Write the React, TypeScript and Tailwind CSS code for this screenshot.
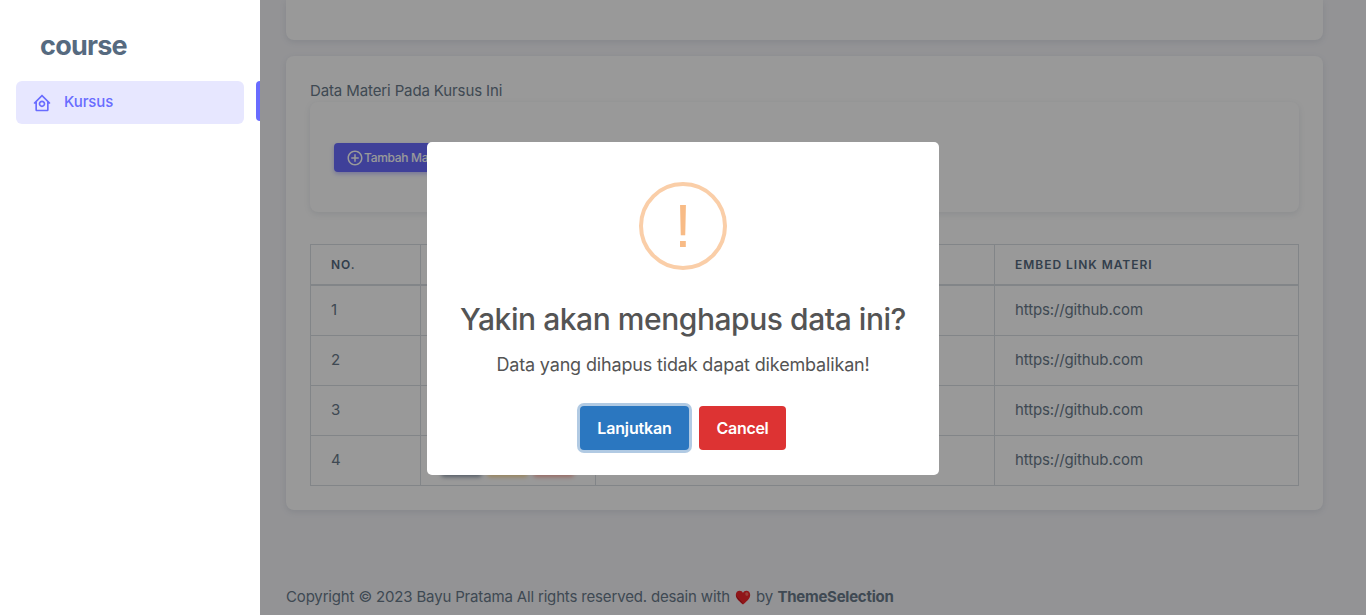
import { BiHomeCircle, BiPlusCircle } from "react-icons/bi";

const rows = [1, 2, 3, 4].map((no) => ({ no, link: "https://github.com" }));

function Sidebar() {
  return (
    <aside className="relative z-20 flex h-full w-[260px] shrink-0 flex-col bg-white">
      <div className="flex h-[81px] items-center pt-[9px] pl-10">
        <span className="text-[27px] leading-none font-bold tracking-[-0.75px] text-[#566a7f]">course</span>
      </div>
      <div className="flex items-start justify-between pl-4">
        <a className="flex h-[43px] w-[228px] items-center rounded-md bg-[#e7e7ff] pl-4 text-[#696cff]">
          <BiHomeCircle className="size-5" />
          <span className="ml-3 text-[15px] font-medium tracking-[-0.1px]">Kursus</span>
        </a>
        <span className="h-10 w-1 rounded-l bg-[#696cff]" />
      </div>
    </aside>
  );
}

function MateriTable() {
  return (
    <table className="mt-8 w-full table-fixed border-separate border-spacing-0 border-l border-[#d9dee3] text-left [&_td]:border-r [&_td]:border-b [&_td]:border-[#d9dee3] [&_td]:px-5 [&_td]:py-0 [&_th]:border-t [&_th]:border-r [&_th]:border-b-2 [&_th]:border-[#d9dee3] [&_th]:px-5 [&_th]:py-0">
      <colgroup>
        <col className="w-[110px]" />
        <col className="w-[175px]" />
        <col className="w-[399px]" />
        <col />
      </colgroup>
      <thead>
        <tr className="h-[42px] text-xs font-semibold tracking-[0.98px] text-[#566a7f]">
          <th className="font-semibold">NO.</th>
          <th />
          <th />
          <th className="font-semibold">EMBED LINK MATERI</th>
        </tr>
      </thead>
      <tbody>
        {rows.map((row) => (
          <tr key={row.no} className="h-[50px]">
            <td>{row.no}</td>
            <td>
              <div className="flex gap-[5px]">
                <button className="h-[29px] w-[41px] shrink-0 rounded bg-[#8592a3] shadow-[0_2px_4px_0_rgba(67,89,113,0.6)]" />
                <button className="h-[29px] w-[41px] shrink-0 rounded bg-[#ffab00] shadow-[0_2px_4px_0_rgba(255,171,0,0.4)]" />
                <button className="h-[29px] w-[41px] shrink-0 rounded bg-[#ff3e1d] shadow-[0_2px_4px_0_rgba(255,62,29,0.4)]" />
              </div>
            </td>
            <td />
            <td className="tracking-[-0.13px]">{row.link}</td>
          </tr>
        ))}
      </tbody>
    </table>
  );
}

function Heart() {
  return (
    <svg viewBox="0 0 16 15" className="mx-[5px] h-[15px] w-4" aria-hidden="true">
      <path d="M8 14.5C5.6 12 .8 9.2.8 4.9.8 2.400 2.500.8 4.600.8 6.200.8 7.400 1.600 8 2.900 8.600 1.600 9.800.8 11.400.8c2.100 0 3.800 1.600 3.800 4.100 0 4.300-4.800 7.100-7.200 9.600z" fill="#f0262b" />
      <path d="M1 4.500C1 8.500 5.500 11.300 8 14c-1-3.500-5.500-5-7-9.500z" fill="#b3121f" />
      <ellipse cx="11.800" cy="4" rx="1.500" ry="1.800" fill="#ff6a5e" transform="rotate(-25 11.800 4)" />
    </svg>
  );
}

function Dialog() {
  return (
    <div className="absolute inset-0 z-30 flex items-start justify-center pt-[142px]">
      <div role="dialog" className="flex h-[333px] w-[512px] flex-col items-center rounded-[5px] bg-white pt-10">
        <div className="flex size-[88px] items-center justify-center rounded-full border-4 border-[#facea8]">
          <span className="font-['Liberation_Sans',sans-serif] text-[61px] leading-none text-[#f8bb86]">!</span>
        </div>
        <h2 className="mt-[31px] text-[30px] leading-9 font-[550] tracking-[-0.45px] whitespace-nowrap text-[#545454]">
          Yakin akan menghapus data ini?
        </h2>
        <p className="mt-[13px] text-lg leading-[30px] tracking-[-0.16px] text-[#545454]">
          Data yang dihapus tidak dapat dikembalikan!
        </p>
        <div className="mt-[26px] flex gap-2.5 text-base font-semibold text-white">
          <button className="h-11 w-[109px] rounded bg-[#2b77c0] tracking-[-0.15px] shadow-[0_0_0_3px_rgba(100,150,200,0.5)]">
            Lanjutkan
          </button>
          <button className="h-11 w-[87px] rounded bg-[#dd3333] tracking-[-0.3px]">Cancel</button>
        </div>
      </div>
    </div>
  );
}

export default function App() {
  return (
    <div className="relative flex h-[615px] w-full overflow-hidden bg-[#f5f5f9] font-['Inter',sans-serif] text-[15px] leading-[22.5px] text-[#697a8a]">
      <Sidebar />
      <main className="flex-1 pl-[26px]">
        <section className="h-10 w-[1037px] rounded-b-lg bg-white shadow-[0_2px_6px_0_rgba(67,89,113,0.12)]" />
        <section className="mt-4 h-[454px] w-[1037px] rounded-lg bg-white px-6 pt-6 shadow-[0_2px_6px_0_rgba(67,89,113,0.12)]">
          <p className="h-[22px] tracking-[-0.12px]">Data Materi Pada Kursus Ini</p>
          <div className="h-[110px] rounded-lg bg-white px-6 pt-[41px] shadow-[0_2px_6px_0_rgba(67,89,113,0.12)]">
            <button className="flex h-[29px] items-center rounded bg-[#696cff] px-3 text-xs font-medium tracking-[-0.3px] text-white shadow-[0_2px_4px_0_rgba(105,108,255,0.4)]">
              <BiPlusCircle className="mt-px size-[18px]" />
              <span>Tambah Materi</span>
            </button>
          </div>
          <MateriTable />
        </section>
        <footer className="mt-[76px] flex items-center whitespace-pre">
          <span className="tracking-[-0.16px]">
            Copyright © 2023 Bayu Pratama All rights reserved. desain with
          </span>
          <Heart />
          <span>by </span>
          <span className="font-bold tracking-[-0.25px]">ThemeSelection</span>
        </footer>
      </main>
      <div className="absolute inset-0 z-10 bg-black/40" />
      <Dialog />
    </div>
  );
}
